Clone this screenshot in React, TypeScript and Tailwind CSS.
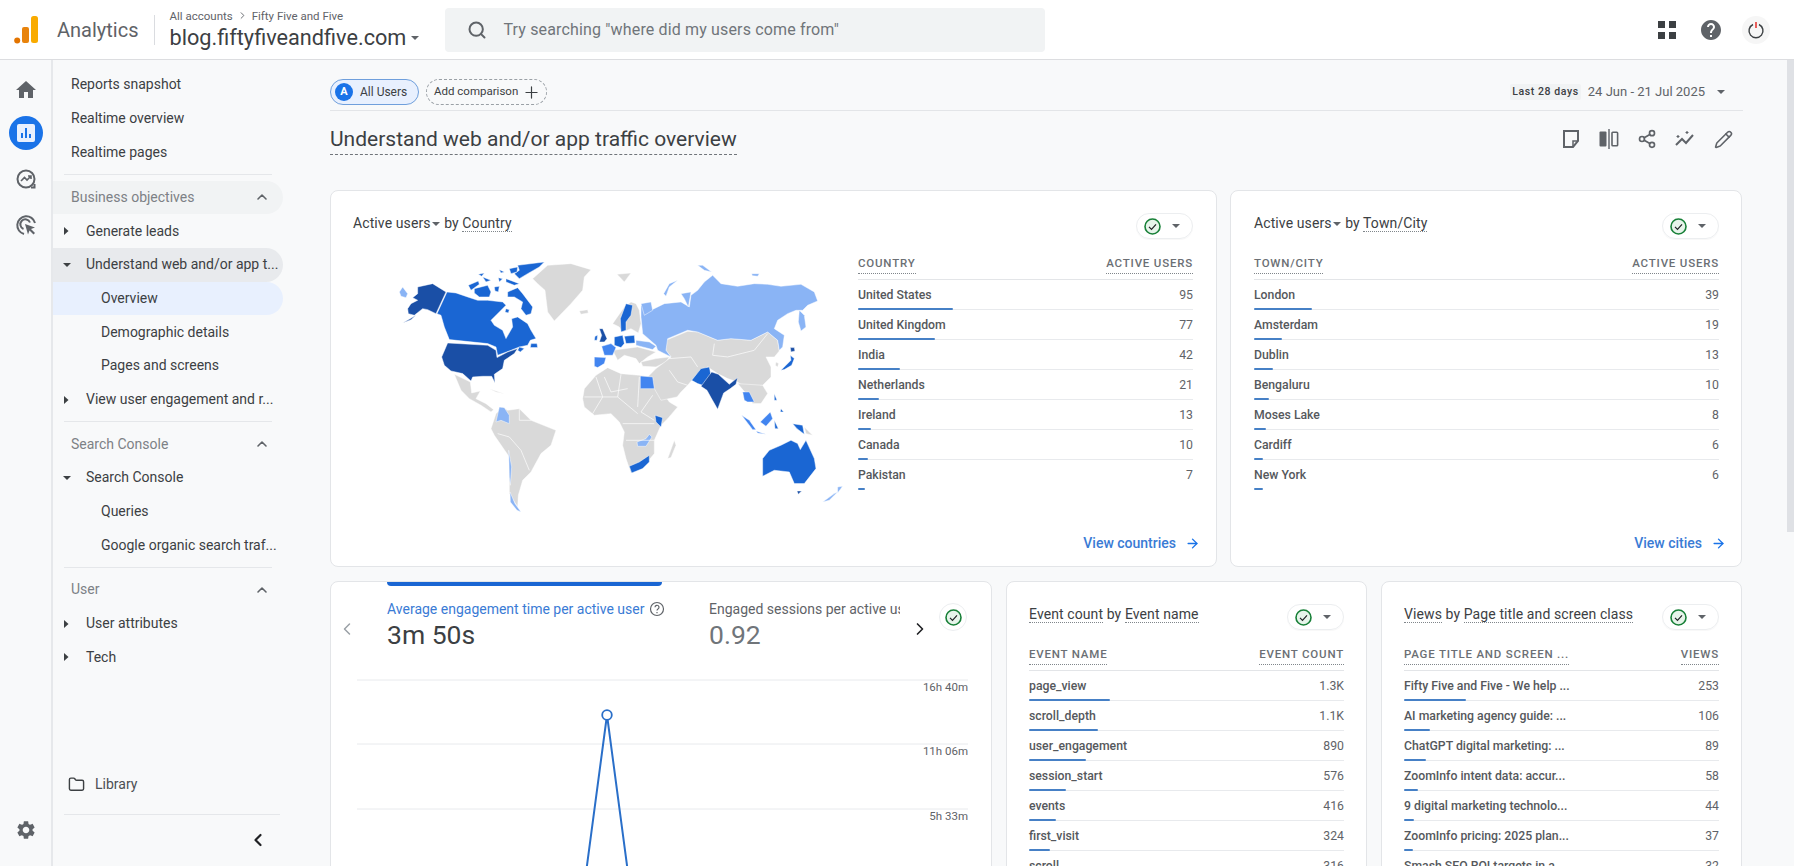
import React from "react";
import { Search, Plus, Share2, Pencil, ArrowRight, ChevronLeft, ChevronRight, ChevronUp, Folder } from "lucide-react";

const DARK = "#1a4fa6";
const MID = "#1a66d3";
const MIDL = "#4285f0";
const LIGHT = "#8ab4f5";
const GRAY = "#d9d9d9";

const crops: Record<string, string> = {
  A: "translate(390 250) scale(0.3333)",
  B: "translate(580 260) scale(0.3333)",
  C: "translate(570 360) scale(0.3333)",
  D: "translate(440 370) scale(0.3333)",
};

const shapes: [string, string, string][] = [
  // land in gray
  ["A", GRAY, "425,85 470,45 540,40 600,58 580,80 575,120 540,160 490,212 470,185 462,120 440,100"],
  ["A", GRAY, "565,182 590,178 592,188 570,192"],
  ["D", GRAY, "40,12 88,35 92,68 118,62 105,85 135,100 158,118 150,125 120,105 85,85 60,60"],
  ["D", GRAY, "145,55 190,70 165,65"],
  ["D", GRAY, "150,175 165,130 185,110 200,120 235,115 270,150 345,180 330,225 300,250 270,305 245,330 232,375 230,410 205,370 205,260 160,195"],
  ["C", GRAY, "35,115 40,85 75,45 110,22 150,40 205,45 245,50 268,85 295,125 320,140 290,175 270,195 250,240 250,280 225,310 180,338 165,295 155,255 160,215 145,185 120,160 70,165 40,140"],
  ["C", GRAY, "310,240 290,295 300,292 315,255"],
  ["B", GRAY, "95,190 130,140 150,125 165,130 175,150 180,190 172,218 150,205 125,215 115,200"],
  ["B", GRAY, "95,270 170,260 225,275 200,290 175,310 165,295 130,285 110,300"],
  ["B", GRAY, "180,305 225,295 265,290 255,305 225,320 185,318"],
  ["B", GRAY, "255,240 320,213 350,215 410,240 450,235 510,240 560,215 590,240 595,272 580,290 555,290 570,320 570,350 545,375 490,380 470,365 440,355 410,340 380,320 345,345 320,375 300,395 288,410 240,420 200,350 225,325 265,295 270,290 255,270"],
  ["B", GRAY, "470,370 545,375 560,400 540,430 515,430 505,410 495,400"],
  ["B", GRAY, "108,42 150,38 130,65"],
  ["B", GRAY, "585,305 593,310 590,320 583,315"],
  ["C", GRAY, "700,200 725,225 705,220"],
  // light
  ["B", LIGHT, "180,170 180,135 210,150 250,130 300,125 325,140 330,105 350,90 370,65 395,45 420,70 470,78 520,70 560,72 600,78 660,72 700,95 710,122 680,135 665,150 645,150 620,160 590,180 580,205 610,225 605,260 595,270 590,240 560,215 510,240 450,235 410,240 350,215 320,210 260,235 255,270 270,290 230,270 225,255 185,220"],
  ["B", LIGHT, "180,130 210,125 215,150 190,165"],
  ["B", LIGHT, "655,150 670,165 675,200 660,212 652,185"],
  ["B", LIGHT, "248,100 265,70 290,60 265,80 255,108"],
  ["B", LIGHT, "300,100 330,95 322,140 310,115"],
  ["B", LIGHT, "350,15 365,15 392,35 370,30"],
  ["B", LIGHT, "512,40 535,40 530,48 514,46"],
  ["B", LIGHT, "165,240 205,245 225,258 215,268 185,260 165,255"],
  ["D", LIGHT, "165,155 175,110 190,112 205,135 205,160 180,150"],
  ["D", LIGHT, "203,240 212,290 208,345 205,320"],
  ["D", LIGHT, "207,365 222,400 240,425 228,420 208,395"],
  ["C", LIGHT, "198,245 225,235 235,222 243,230 225,258 200,258"],
  ["C", LIGHT, "755,425 790,400 800,395 775,420"],
  ["C", LIGHT, "800,380 815,378 800,398"],
  ["A", LIGHT, "25,125 35,110 50,130 45,142 30,138"],
  // mid-light
  ["C", MIDL, "208,47 245,50 250,85 208,85"],
  ["B", MIDL, "62,258 90,250 105,262 95,285 70,285"],
  ["B", MIDL, "40,290 75,292 70,310 50,322 40,318"],
  ["C", MIDL, "515,95 535,95 550,125 530,125 520,120"],
  ["C", MIDL, "568,185 598,155 605,175 585,198"],
  ["C", MIDL, "512,165 535,180 555,208 545,208"],
  ["C", MIDL, "555,212 585,222 560,218"],
  // mid
  ["A", MID, "168,125 195,128 230,140 260,150 290,150 335,155 345,165 325,185 300,210 310,225 335,240 345,265 365,230 362,205 380,200 410,220 420,240 435,265 418,270 410,285 385,290 360,300 320,315 315,290 290,280 175,268 160,230 150,195 138,190"],
  ["A", MID, "420,280 438,280 440,292 418,292"],
  ["A", MID, "385,290 400,295 388,305 380,300"],
  ["A", MID, "350,125 380,112 395,130 425,170 420,190 405,195 390,175 395,155 370,140 350,140"],
  ["A", MID, "380,45 460,35 445,50 410,70 385,85 370,70 385,60"],
  ["A", MID, "355,55 380,50 378,65 360,70"],
  ["A", MID, "250,115 290,105 300,125 295,140 265,140 250,128"],
  ["A", MID, "232,105 262,92 265,102 240,120"],
  ["A", MID, "262,72 280,68 272,78"],
  ["A", MID, "275,80 300,90 285,95"],
  ["A", MID, "322,82 335,85 325,95"],
  ["A", MID, "310,110 325,108 322,125 312,122"],
  ["A", MID, "325,58 340,65 330,68"],
  ["A", MID, "345,85 385,100 370,105 345,95"],
  ["A", MID, "345,175 355,178 352,188 342,185"],
  ["C", MID, "575,295 595,270 630,255 660,240 680,250 688,268 705,240 730,295 735,325 700,370 670,370 655,335 610,330 575,348"],
  ["C", MID, "175,318 205,305 235,285 235,305 215,325 182,338"],
  ["C", MID, "252,165 275,172 270,200 255,185"],
  ["C", MID, "665,190 695,195 700,222 678,205"],
  ["C", MID, "610,100 618,120 610,120"],
  ["C", MID, "630,145 638,155 628,155"],
  ["C", MID, "610,180 622,205 612,205"],
  ["B", MID, "135,130 155,135 150,165 135,185 135,210 120,215 118,175"],
  ["B", MID, "42,228 50,225 48,240 40,240"],
  ["B", MID, "100,230 125,225 130,250 120,262 100,255"],
  ["B", MID, "130,228 160,225 162,248 135,250"],
  ["B", MID, "332,360 360,325 385,320 390,345 365,375 350,370"],
  ["B", MID, "600,330 630,300 628,285 640,295 632,315 610,328"],
  // dark
  ["A", DARK, "50,175 60,160 80,150 65,142 80,130 80,110 125,100 165,125 135,190 110,178 95,175 70,195 52,190"],
  ["A", DARK, "35,218 75,195 60,208"],
  ["A", DARK, "170,278 290,285 315,300 318,322 350,305 380,295 370,310 340,330 335,355 310,372 312,398 302,378 275,378 245,380 240,392 215,370 180,362 160,345 152,320"],
  ["B", DARK, "55,205 65,205 78,235 70,245 55,245 62,225"],
  ["B", DARK, "360,378 392,335 412,342 445,372 470,352 465,372 448,385 428,398 410,447 390,412 378,390"],
  ["B", DARK, "628,262 640,262 642,272 630,275"],
  ["C", DARK, "678,392 692,392 682,402"],
];

const borders: [string, string][] = [
  ["C", "75,50 95,110 65,160"],
  ["C", "150,42 140,110 200,160"],
  ["C", "205,50 200,140"],
  ["C", "40,110 140,110"],
  ["C", "245,105 210,155 250,180"],
  ["C", "155,190 250,190"],
  ["C", "165,240 250,240"],
  ["C", "100,50 120,95 170,85"],
  ["D", "205,200 240,240 265,300"],
  ["D", "235,115 235,150 270,150"],
  ["D", "170,190 205,200"],
  ["B", "400,250 395,285 440,290 520,270 560,220"],
  ["B", "265,295 330,290 350,320"],
  ["B", "265,330 290,365 320,375"],
];

function WorldMap() {
  return (
    <svg viewBox="330 256.700 520 260" width="520" height="260" className="mt-[24px] block">
      {shapes.map(([crop, c, p], i) => (
        <polygon key={i} transform={crops[crop]} points={p} fill={c} stroke="#ffffff" strokeWidth="1.400" strokeLinejoin="round" />
      ))}
      {borders.map(([crop, p], i) => (
        <polyline key={i} transform={crops[crop]} points={p} fill="none" stroke="#ffffff" strokeWidth="2" strokeLinejoin="round" />
      ))}
    </svg>
  );
}

function Caret({ c = "#5f6368", s = 10 }: { c?: string; s?: number }) {
  return (
    <svg width={s} height={s / 2} viewBox="0 0 10 5" className="shrink-0">
      <path d="M0 0h10L5 5z" fill={c} />
    </svg>
  );
}
function CaretRight() {
  return (
    <svg width="5" height="10" viewBox="0 0 5 10" className="shrink-0">
      <path d="M0 1l4.500 4L0 9z" fill="#3c4043" />
    </svg>
  );
}
function MIcon({ d, size = 24, c = "#5f6368" }: { d: string; size?: number; c?: string }) {
  return (
    <svg width={size} height={size} viewBox="0 0 24 24" className="shrink-0">
      <path d={d} fill={c} />
    </svg>
  );
}
function CheckCircle() {
  return (
    <svg width="17" height="17" viewBox="0 0 17 17" className="shrink-0">
      <circle cx="8.500" cy="8.500" r="7.500" fill="#e6f4ea" stroke="#188038" strokeWidth="1.600" />
      <path d="M5 8.800l2.500 2.500 4.500-5" fill="none" stroke="#202124" strokeWidth="1.200" />
    </svg>
  );
}
function Pill() {
  return (
    <div className="flex h-[26px] w-[57px] shrink-0 items-center justify-between rounded-full border border-[#eceef0] pl-[7px] pr-[12px] shadow-[0_1px_1px_rgba(0,0,0,0.03)]">
      <CheckCircle />
      <Caret s={8} />
    </div>
  );
}

type Row = [string, string, number];

function DataTable({ h1, h2, rows }: { h1: string; h2: string; rows: Row[] }) {
  return (
    <div className="mt-[15px] flex flex-col">
      <div className="flex h-[26px] items-start justify-between border-b border-[#e3e5e8] pt-[2px] text-[11.500px] font-medium uppercase leading-[15px] tracking-[0.8px] text-[#6b6f74]">
        <span className="border-b border-dotted border-[#80868b] pb-[2px]">{h1}</span>
        <span className="border-b border-dotted border-[#80868b] pb-[2px]">{h2}</span>
      </div>
      {rows.map(([name, val, w], i) => (
        <div key={name} className="flex h-[30px] flex-col">
          <div className="flex h-[29px] items-center justify-between pt-[1px] text-[12.250px] text-[#55585c]">
            <span className="font-medium">{name}</span>
            <span className="text-[#5f6368]">{val}</span>
          </div>
          <div className={i === rows.length - 1 ? "h-px" : "h-px bg-[#e8eaed]"}>
            <div className="h-[2px] -translate-y-[1px] rounded-full bg-[#4680c6]" style={{ width: w }} />
          </div>
        </div>
      ))}
    </div>
  );
}

function CardTitle({ children }: { children: React.ReactNode }) {
  return <div className="whitespace-nowrap text-[14px] leading-[20px] tracking-[0.1px] text-[#3c4043]">{children}</div>;
}
const Dot = ({ children }: { children: React.ReactNode }) => (
  <span className="border-b border-dotted border-[#80868b]">{children}</span>
);

function ViewLink({ label }: { label: string }) {
  return (
    <div className="-mr-[7px] mt-auto flex items-center justify-end gap-[9px] pb-[12px] text-[14px] font-medium text-[#3a7bd5]">
      <span>{label}</span>
      <ArrowRight size={15} strokeWidth={2.200} color="#1a73e8" />
    </div>
  );
}

function NavRow({ children, cls = "" }: { children: React.ReactNode; cls?: string }) {
  return (
    <div className={`flex h-[33.700px] w-[230px] shrink-0 items-center rounded-r-full text-[14px] text-[#3c4043] ${cls}`}>
      {children}
    </div>
  );
}
const Top = ({ t }: { t: string }) => <NavRow cls="pl-[18px]">{t}</NavRow>;
const Parent = ({ t, open, cls = "" }: { t: string; open?: boolean; cls?: string }) => (
  <NavRow cls={cls}>
    <span className="w-[33px] shrink-0">
      <span className="flex w-[27px] justify-center">{open ? <Caret c="#3c4043" s={8} /> : <CaretRight />}</span>
    </span>
    <span className="whitespace-nowrap">{t}</span>
  </NavRow>
);
const Sub = ({ t, cls = "" }: { t: string; cls?: string }) => <NavRow cls={`pl-[48px] whitespace-nowrap ${cls}`}>{t}</NavRow>;
const Section = ({ t, cls = "" }: { t: string; cls?: string }) => (
  <NavRow cls={`justify-between pl-[18px] pr-[13px] text-[#7d8186] ${cls}`}>
    <span>{t}</span>
    <ChevronUp size={16} color="#5f6368" strokeWidth={2.400} />
  </NavRow>
);
const Rule = ({ cls = "" }: { cls?: string }) => <div className={`mx-[11px] h-px w-[208px] shrink-0 bg-[#e5e7ea] ${cls}`} />;

const countries: Row[] = [
  ["United States", "95", 95],
  ["United Kingdom", "77", 77],
  ["India", "42", 42],
  ["Netherlands", "21", 21],
  ["Ireland", "13", 13],
  ["Canada", "10", 10],
  ["Pakistan", "7", 7],
];
const cities: Row[] = [
  ["London", "39", 58],
  ["Amsterdam", "19", 28],
  ["Dublin", "13", 19],
  ["Bengaluru", "10", 15],
  ["Moses Lake", "8", 12],
  ["Cardiff", "6", 9],
  ["New York", "6", 9],
];
const events: Row[] = [
  ["page_view", "1.3K", 81],
  ["scroll_depth", "1.1K", 69],
  ["user_engagement", "890", 57],
  ["session_start", "576", 37],
  ["events", "416", 27],
  ["first_visit", "324", 21],
  ["scroll", "316", 20],
];
const views: Row[] = [
  ["Fifty Five and Five - We help ...", "253", 62],
  ["AI marketing agency guide: ...", "106", 26],
  ["ChatGPT digital marketing: ...", "89", 22],
  ["ZoomInfo intent data: accur...", "58", 14],
  ["9 digital marketing technolo...", "44", 10],
  ["ZoomInfo pricing: 2025 plan...", "37", 9],
  ["Smash SEO ROI targets in a...", "32", 8],
];

export default function App() {
  return (
    <div
      className="flex h-[866px] w-[1794px] flex-col overflow-hidden bg-[#f8f9fa]"
      style={{ fontFamily: "Roboto, 'Liberation Sans', sans-serif" }}
    >
      {/* Header */}
      <header className="flex h-[60px] shrink-0 items-center border-b border-[#dcdde0] bg-white">
        <svg width="26" height="28" viewBox="0 0 26 28" className="ml-[14px] shrink-0">
          <circle cx="3.200" cy="24.500" r="3" fill="#e37400" />
          <rect x="8" y="11" width="7" height="16" rx="2" fill="#e8830c" />
          <rect x="17" y="0" width="7" height="27" rx="2.500" fill="#f9ab00" />
        </svg>
        <span className="ml-[17px] text-[20px] leading-none text-[#5f6368]">Analytics</span>
        <div className="ml-[15px] h-[30px] w-px bg-[#dadce0]" />
        <div className="ml-[15px] flex w-[275px] flex-col">
          <div className="flex items-center gap-[4px] text-[11.500px] leading-[14px] text-[#5f6368]">
            All accounts <ChevronRight size={11} strokeWidth={2} /> Fifty Five and Five
          </div>
          <div className="mt-[2px] flex items-center gap-[5px] text-[21.700px] leading-[26px] text-[#3c4043]">
            blog.fiftyfiveandfive.com <Caret s={8} />
          </div>
        </div>
        <div className="flex h-[44px] w-[600px] items-center rounded-[4px] bg-[#f1f3f4] pl-[22px]">
          <Search size={20} color="#5f6368" strokeWidth={2.400} />
          <span className="ml-[17px] text-[16px] tracking-[0.15px] text-[#70757a]">Try searching "where did my users come from"</span>
        </div>
        <div className="ml-auto mr-[24px] flex items-center">
          <div className="grid h-[18px] w-[18px] grid-cols-2 gap-[4px]">
            <div className="bg-[#3c4043]" />
            <div className="bg-[#3c4043]" />
            <div className="bg-[#3c4043]" />
            <div className="bg-[#3c4043]" />
          </div>
          <span className="ml-[23px]">
            <MIcon
              size={24}
              d="M12 2C6.480 2 2 6.480 2 12s4.480 10 10 10 10-4.480 10-10S17.520 2 12 2zm1 17h-2v-2h2v2zm2.070-7.750l-.900.920C13.450 12.900 13 13.500 13 15h-2v-.500c0-1.100.450-2.100 1.170-2.830l1.240-1.260c.370-.360.590-.860.590-1.410 0-1.100-.900-2-2-2s-2 .900-2 2H8c0-2.210 1.790-4 4-4s4 1.790 4 4c0 .880-.360 1.680-.930 2.250z"
            />
          </span>
          <div className="ml-[19px] flex h-[28px] w-[28px] items-center justify-center rounded-full bg-[#f6f6f6]">
            <svg width="18" height="18" viewBox="0 0 18 18">
              <path d="M6 3.500a7 7 0 1 0 6 0" fill="none" stroke="#3c4043" strokeWidth="1.400" />
              <path d="M9 1v6" stroke="#e53935" strokeWidth="1.600" />
            </svg>
          </div>
        </div>
      </header>

      <div className="flex min-h-0 flex-1">
        {/* Rail */}
        <div className="flex w-[53px] shrink-0 flex-col items-center border-r-2 border-[#e6e8eb] pt-[18px]">
          <MIcon size={24} c="#5f6368" d="M10 20v-6h4v6h5v-8h3L12 3 2 12h3v8z" />
          <div className="mt-[14px] flex h-[34px] w-[34px] items-center justify-center rounded-full bg-[#1a73e8]">
            <div className="flex h-[18px] w-[18px] items-end justify-center gap-[2px] rounded-[2px] bg-[#e8f0fe] pb-[4px]">
              <div className="h-[5px] w-[2px] bg-[#1a73e8]" />
              <div className="h-[10px] w-[2px] bg-[#1a73e8]" />
              <div className="h-[4px] w-[2px] bg-[#1a73e8]" />
            </div>
          </div>
          <svg width="22" height="22" viewBox="0 0 22 22" className="mt-[18px]" fill="none" stroke="#5f6368" strokeWidth="2">
            <circle cx="11" cy="11" r="8.500" />
            <path d="M6 13l3.500-3.500 2.500 2.500 4-4M13 8h3v3" strokeWidth="1.600" />
            <path d="M16 19.500h3.500V16" />
          </svg>
          <svg width="24" height="24" viewBox="0 0 24 24" className="mt-[23px]" fill="none" stroke="#5f6368" strokeWidth="2">
            <path d="M10 21A9 9 0 1 1 21 10" />
            <path d="M9.500 16A5 5 0 1 1 16 9.500" />
            <path d="M11 11l10 3.500-4 1.500 4 4-1.500 1.500-4-4-1.500 4z" fill="#5f6368" stroke="none" />
          </svg>
          <div className="mt-auto mb-[25px]">
            <MIcon
              size={22}
              d="M19.140 12.940c.040-.300.060-.610.060-.940 0-.320-.020-.640-.070-.940l2.030-1.580c.180-.140.230-.410.120-.610l-1.920-3.320c-.120-.220-.370-.290-.590-.220l-2.390.960c-.500-.380-1.030-.700-1.620-.940l-.360-2.540c-.040-.240-.240-.410-.480-.410h-3.840c-.240 0-.430.170-.470.410l-.360 2.540c-.590.240-1.130.570-1.620.940l-2.390-.960c-.220-.080-.470 0-.590.220L2.740 8.870c-.120.210-.080.470.120.610l2.030 1.580c-.050.300-.090.630-.090.940s.020.640.070.940l-2.030 1.580c-.180.140-.230.410-.120.610l1.920 3.320c.120.220.370.290.590.220l2.390-.960c.500.380 1.030.700 1.620.940l.360 2.540c.050.240.240.410.480.410h3.840c.240 0 .440-.17.470-.41l.360-2.540c.590-.240 1.130-.560 1.620-.940l2.390.96c.220.080.470 0 .590-.220l1.920-3.320c.120-.220.070-.470-.120-.61l-2.010-1.580zM12 15.600c-1.980 0-3.600-1.620-3.600-3.600s1.620-3.600 3.600-3.600 3.600 1.620 3.600 3.600-1.620 3.600-3.600 3.600z"
            />
          </div>
        </div>

        {/* Sidebar */}
        <nav className="flex w-[235px] shrink-0 flex-col pt-[8px]">
          <Top t="Reports snapshot" />
          <Top t="Realtime overview" />
          <Top t="Realtime pages" />
          <Rule cls="mt-[5px] mb-[5.500px]" />
          <Section t="Business objectives" cls="bg-[#f1f3f4]" />
          <Parent t="Generate leads" />
          <Parent t="Understand web and/or app t..." open cls="bg-[#e8eaed]" />
          <Sub t="Overview" cls="bg-[#e8f0fe] text-[#2f6fd0]" />
          <Sub t="Demographic details" />
          <Sub t="Pages and screens" />
          <Parent t="View user engagement and r..." />
          <Rule cls="mt-[5px] mb-[5px]" />
          <Section t="Search Console" />
          <Parent t="Search Console" open />
          <Sub t="Queries" />
          <Sub t="Google organic search traf..." />
          <Rule cls="mt-[5px] mb-[5px]" />
          <Section t="User" />
          <Parent t="User attributes" />
          <Parent t="Tech" />
          <div className="mt-auto flex items-center pl-[15px] text-[14px] text-[#4b4e52]">
            <Folder size={17} color="#3c4043" strokeWidth={2} />
            <span className="ml-[10px]">Library</span>
          </div>
          <div className="mx-[11px] mt-[19px] h-px w-[216px] bg-[#e5e7ea]" />
          <div className="flex h-[51px] items-start justify-end pr-[20px] pt-[15px]">
            <ChevronLeft size={20} color="#202124" strokeWidth={2.600} />
          </div>
        </nav>

        {/* Main */}
        <main className="min-w-0 flex-1 overflow-hidden pl-[42px] pr-[45px] pt-[19px]">
          <div className="flex h-[32px] w-[1413px] items-start border-b border-[#e3e5e8]">
            <div className="flex h-[26px] items-center rounded-full border border-[#6f9fdc] bg-[#e8f0fe] pl-[4px] pr-[11px]">
              <div className="flex h-[18px] w-[18px] items-center justify-center rounded-full bg-[#1a73e8] text-[11px] font-bold text-white">A</div>
              <span className="ml-[7px] text-[12px] text-[#3c4043]">All Users</span>
            </div>
            <div className="ml-[7px] flex h-[26px] w-[121px] items-center justify-end gap-[4px] rounded-full border border-dashed border-[#9aa0a6] pr-[5px] text-[11.500px] text-[#3c4043]">
              Add comparison <Plus size={19} strokeWidth={1.500} />
            </div>
            <div className="ml-auto flex h-[26px] items-center pr-[18px]">
              <span className="rounded-[2px] bg-[#f1f3f4] px-[2px] text-[10.500px] font-medium tracking-[0.6px] text-[#3c4043]">Last 28 days</span>
              <span className="ml-[7px] text-[13px] text-[#5f6368]">24 Jun - 21 Jul 2025</span>
              <span className="ml-[12px]">
                <Caret s={8} />
              </span>
            </div>
          </div>

          <div className="flex h-[79px] w-[1413px] items-start">
            <h1 className="mt-[15px] border-b border-dashed border-[#70757a] pb-[2px] text-[21px] font-normal leading-[26px] text-[#3c4043]">
              Understand web and/or app traffic overview
            </h1>
            <div className="ml-auto mr-[10px] mt-[18px] flex items-center gap-[18px] text-[#5f6368]">
              <svg width="20" height="20" viewBox="0 0 20 20" fill="none" stroke="#5f6368" strokeWidth="2">
                <path d="M3 2h14v10l-5 6H3z" />
                <path d="M17 12h-5v6" strokeWidth="1.500" />
              </svg>
              <svg width="20" height="20" viewBox="0 0 20 20" fill="#5f6368">
                <rect x="0.500" y="2.500" width="7" height="15" rx="1" />
                <rect x="9.300" y="0" width="1.400" height="20" />
                <rect x="13" y="3.200" width="5.600" height="13.600" rx="0.800" fill="none" stroke="#5f6368" strokeWidth="1.600" />
              </svg>
              <Share2 size={20} color="#5f6368" strokeWidth={2} />
              <svg width="21" height="20" viewBox="0 0 21 20" fill="none" stroke="#5f6368" strokeWidth="2">
                <path d="M1 16l6-6 4 4 7-8" />
                <path d="M3 6v3M1.500 7.500h3M12 2v3M10.500 3.500h3" strokeWidth="1.200" />
              </svg>
              <Pencil size={19} color="#5f6368" strokeWidth={2} />
            </div>
          </div>

          {/* Row 1 */}
          <div className="flex w-[1412px] gap-[13px]">
            <section className="flex h-[377px] w-[887px] rounded-[8px] border border-[#e3e5e8] bg-white">
              <div className="w-[527px] shrink-0 pt-[22px]">
                <div className="pl-[22px]">
                  <CardTitle>
                    Active users<span className="mx-[1px] inline-block translate-y-[-2px]"><Caret s={8} /></span> by <Dot>Country</Dot>
                  </CardTitle>
                </div>
                <WorldMap />
              </div>
              <div className="flex w-[335px] shrink-0 flex-col pt-[22px]">
                <div className="flex justify-end">
                  <Pill />
                </div>
                <DataTable h1="Country" h2="Active users" rows={countries} />
                <ViewLink label="View countries" />
              </div>
            </section>
            <section className="flex h-[377px] w-[512px] flex-col rounded-[8px] border border-[#e3e5e8] bg-white pl-[23px] pr-[22px] pt-[22px]">
              <div className="flex items-start justify-between">
                <CardTitle>
                  Active users<span className="mx-[1px] inline-block translate-y-[-2px]"><Caret s={8} /></span> by <Dot>Town/City</Dot>
                </CardTitle>
                <Pill />
              </div>
              <DataTable h1="Town/City" h2="Active users" rows={cities} />
              <ViewLink label="View cities" />
            </section>
          </div>

          {/* Row 2 */}
          <div className="mt-[14px] flex w-[1412px] gap-[14px]">
            <section className="h-[320px] w-[662px] shrink-0 overflow-hidden rounded-t-[8px] border border-[#e3e5e8] bg-white">
              <div className="flex h-[78px] items-start">
                <div className="flex w-[56px] shrink-0 justify-end pr-[30px] pt-[37px]">
                  <ChevronLeft size={20} color="#9aa0a6" strokeWidth={1.800} />
                </div>
                <div className="w-[322px] shrink-0">
                  <div className="h-[4px] w-[275px] rounded-b-full bg-[#1a66d3]" />
                  <div className="mt-[13px] flex h-[20px] items-center gap-[5px] whitespace-nowrap text-[14px] text-[#3a7bd5]">
                    Average engagement time per active user
                    <svg width="16" height="16" viewBox="0 0 16 16" fill="none" stroke="#5f6368" strokeWidth="1.200">
                      <circle cx="8" cy="8" r="6.500" />
                      <path d="M6 6.300a2 2 0 1 1 3 1.700c-.700.400-1 .800-1 1.600M8 11v1.300" />
                    </svg>
                  </div>
                  <div className="h-[32px] text-[26.500px] leading-[32px] text-[#3c4043]">3m 50s</div>
                </div>
                <div className="w-[191px] shrink-0 overflow-hidden">
                  <div className="h-[4px]" />
                  <div className="mt-[13px] flex h-[20px] items-center whitespace-nowrap text-[14px] text-[#5f6368]">
                    Engaged sessions per active user
                  </div>
                  <div className="h-[32px] text-[26.500px] leading-[32px] text-[#70757a]">0.92</div>
                </div>
                <div className="flex w-[38px] shrink-0 justify-center pl-[1px] pt-[37px]">
                  <ChevronRight size={20} color="#202124" strokeWidth={2} />
                </div>
                <div className="ml-[1px] mt-[21px] flex h-[28px] w-[28px] shrink-0 items-center justify-center rounded-full border border-[#eceef0]">
                  <CheckCircle />
                </div>
              </div>
              <svg width="660" height="240" viewBox="331 660 660 240" className="block">
                <g stroke="#e8eaed" strokeWidth="1">
                  <line x1="357" y1="680" x2="968" y2="680" />
                  <line x1="357" y1="744" x2="968" y2="744" />
                  <line x1="357" y1="809" x2="968" y2="809" />
                </g>
                <g fontSize="11.500" fill="#5f6368" textAnchor="end" fontFamily="Roboto, sans-serif">
                  <text x="968" y="691">16h 40m</text>
                  <text x="968" y="755">11h 06m</text>
                  <text x="968" y="820">5h 33m</text>
                </g>
                <polyline points="580,918 607,715 634,918" fill="none" stroke="#2a6fc9" strokeWidth="2" />
                <circle cx="607" cy="715" r="4.800" fill="#ffffff" stroke="#2a6fc9" strokeWidth="1.800" />
              </svg>
            </section>
            <section className="h-[320px] w-[361px] shrink-0 overflow-hidden rounded-t-[8px] border border-[#e3e5e8] bg-white px-[22px] pt-[22px]">
              <div className="flex items-start justify-between">
                <CardTitle>
                  <Dot>Event count</Dot> by <Dot>Event name</Dot>
                </CardTitle>
                <Pill />
              </div>
              <DataTable h1="Event name" h2="Event count" rows={events} />
            </section>
            <section className="h-[320px] w-[361px] shrink-0 overflow-hidden rounded-t-[8px] border border-[#e3e5e8] bg-white px-[22px] pt-[22px]">
              <div className="flex items-start justify-between">
                <CardTitle>
                  <Dot>Views</Dot> by <Dot>Page title and screen class</Dot>
                </CardTitle>
                <Pill />
              </div>
              <DataTable h1="Page title and screen ..." h2="Views" rows={views} />
            </section>
          </div>
        </main>

        {/* Scrollbar */}
        <div className="w-[7px] shrink-0">
          <div className="h-[472px] bg-[#dfe1e5]" />
        </div>
      </div>
    </div>
  );
}
